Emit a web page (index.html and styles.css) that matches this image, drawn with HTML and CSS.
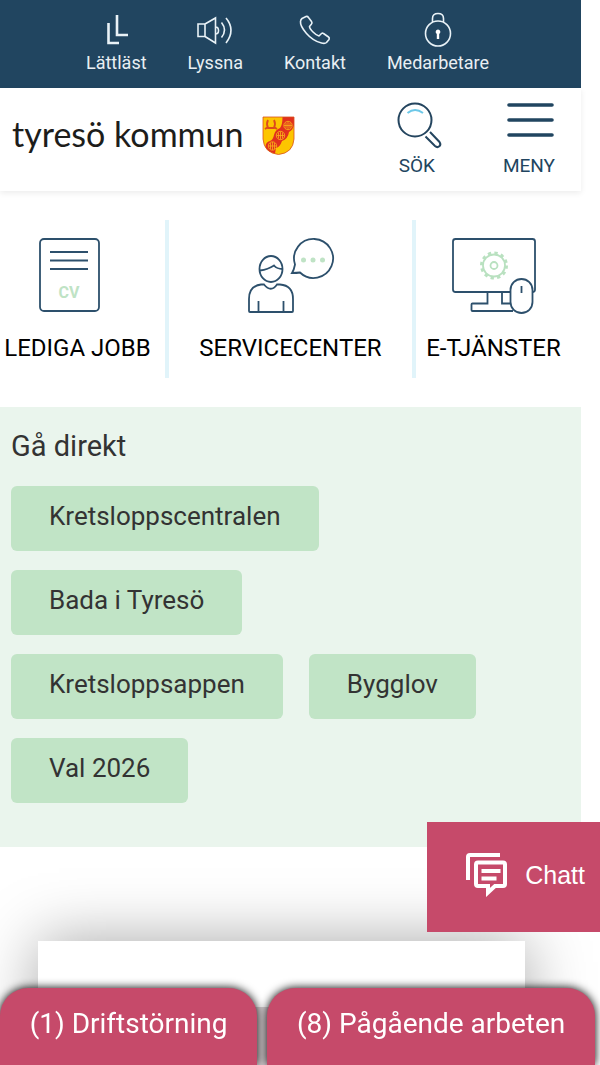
FILE: index.html
```
<!DOCTYPE html>
<html lang="sv">
<head>
  <meta charset="utf-8">
  <meta name="viewport" content="width=device-width, initial-scale=1">
  <title>Tyresö kommun</title>
  <link rel="stylesheet" href="styles.css">
</head>
<body>
  <div class="page">
    <nav class="topnav" aria-label="Genvägar">
      <a href="#lattlast">
        <svg width="36" height="36" viewBox="0 0 36 36"><path class="thick" d="M10.500 8v20H21M19 0v20h11"/></svg>
        <span>Lättläst</span>
      </a>
      <a href="#lyssna">
        <svg width="36" height="36" viewBox="0 0 36 36"><path d="M1 9h7v12.500H1zM8 9l10.500-6v25L8 21.500M18.500 12q3 0 3 3.500t-3 3.500M24.500 7.500q6 7.500 0 15M29 3q10 12 0 25"/></svg>
        <span>Lyssna</span>
      </a>
      <a href="#kontakt">
        <svg width="36" height="36" viewBox="0 0 36 36"><path d="M5 3.500L9 1.500q1.500-.5 2.500 1l3 4q1 1.500 0 2.500l-2 2.500q0 2 3.500 5.500t6 4l2.500-2.500q1-.8 2 0l5 3.500q1.300 1 .5 2.500l-2.500 3q-1.500 1.500-5 .5Q16 26 9.500 18.500T3.500 6.500Q3.700 4.500 5 3.500z"/></svg>
        <span>Kontakt</span>
      </a>
      <a href="#medarbetare">
        <svg width="36" height="36" viewBox="0 0 36 36"><circle cx="18" cy="18.500" r="12.500"/><path d="M12.500 7V3.500q0-5 5.500-5t5.500 5V7"/><path class="fill" d="M18 14.500a2.500 2.500 0 0 1 1.200 4.600V24h-2.400v-4.900A2.500 2.500 0 0 1 18 14.500z"/></svg>
        <span>Medarbetare</span>
      </a>
    </nav>

    <header class="header">
      <a class="logo" href="#start">
        <span>tyresö kommun</span>
        <svg width="34" height="40" viewBox="0 0 34 40">
          <path fill="#fdc500" d="M1 1h31v22q-1 14-15.500 15.500Q2 37 1 23z"/>
          <path fill="#e1301e" d="M20.500 1H32v8q-1 5-5 7-1 7-7 9-2 6-6 7l-1 5.500Q6 36 3.500 31q0-5 4.500-6 3-1 4-6 1-5 6-7 2.500-3 2.500-11z"/>
          <g fill="#e1301e" stroke="#f9b21a" stroke-width=".8">
            <circle cx="26" cy="9.500" r="4.200"/><path d="M26 5.500v8M22 9.500h8M24 6.500v6M28 6.500v6"/>
            <circle cx="18.500" cy="19.500" r="4.200"/><path d="M18.500 15.500v8M14.500 19.500h8M16.500 16.500v6M20.500 16.500v6"/>
            <circle cx="10.500" cy="30" r="4.200"/><path d="M10.500 26v8M6.500 30h8M8.500 27v6M12.500 27v6"/>
          </g>
          <path fill="none" stroke="#dc4a1c" stroke-width="1.800" d="M6 4q-2 4 0 8h6q2-4 0-8M3 13l3-2M15 13l-3-2"/>
          <path fill="none" stroke="#d8501c" stroke-width=".8" d="M1 1h31v22q-1 14-15.500 15.500Q2 37 1 23z"/>
        </svg>
      </a>
      <div class="tools">
        <button type="button">
          <svg width="52" height="48" viewBox="0 0 52 48">
            <g fill="none" stroke="#24455f" stroke-width="2"><circle cx="24" cy="18" r="16.500"/><path d="M39 30l9.500 10q1.800 2.500-.2 4.300t-4.300-.3L34.500 34.500"/></g>
            <path fill="none" stroke="#6dc8e8" stroke-width="2" d="M16.500 11q7.500-6 15.500 0"/>
          </svg>
          <span>SÖK</span>
        </button>
        <button type="button">
          <svg width="52" height="48" viewBox="0 0 52 48"><path stroke="#214560" stroke-width="3.600" stroke-linecap="round" d="M6 3h43M6 18h43M6 33h43"/></svg>
          <span>MENY</span>
        </button>
      </div>
    </header>

    <main>
      <nav class="shortcuts" aria-label="Tjänster">
        <a href="#jobb">
          <svg width="90" height="80" viewBox="0 0 90 80">
            <rect x="7" y="3" width="59" height="72" rx="4"/><path d="M17 16h38M17 24.500h38M17 33h38"/>
            <text x="36" y="62" text-anchor="middle">CV</text>
          </svg>
          <span>LEDIGA JOBB</span>
        </a>
        <a href="#servicecenter">
          <svg width="90" height="80" viewBox="0 0 90 80">
            <ellipse cx="25" cy="33" rx="11.500" ry="13"/><path d="M14 34.500q8-1 14-5 3 3.500 8.500 3.500"/>
            <path d="M3 75V63Q3 50 15 48.500h3Q25 57 31 48.500h3q13 1 13 14.500v12q0 1-1 1H4q-1 0-1-1zM12.500 76V65M37.500 76V65"/>
            <path d="M49 28.500A19.500 19.500 0 1 1 54 36.500Q51 37 46 37q2-3 3-8.500z"/>
            <g class="mint-fill"><circle cx="57.500" cy="24" r="2.500"/><circle cx="67" cy="24" r="2.500"/><circle cx="76.500" cy="24" r="2.500"/></g>
          </svg>
          <span>SERVICECENTER</span>
        </a>
        <a href="#etjanster">
          <svg width="90" height="80" viewBox="0 0 90 80">
            <rect x="4" y="3" width="82" height="53" rx="2.500"/>
            <path d="M38.500 56v11.500H23.500q-1 0-1 1V74q0 1 1 1H64M53 56v11.500h9"/>
            <rect class="mouse" x="61.500" y="43" width="22" height="34" rx="11"/><path d="M72.500 50v7"/>
            <g class="mint"><circle cx="45" cy="29.500" r="3.500"/><circle cx="45" cy="29.500" r="11"/><circle class="teeth" cx="45" cy="29.500" r="12.500"/></g>
          </svg>
          <span>E-TJÄNSTER</span>
        </a>
      </nav>

      <section class="direct">
        <h2>Gå direkt</h2>
        <ul>
          <li><a href="#kretsloppscentralen">Kretsloppscentralen</a></li>
          <li><a href="#bada">Bada i Tyresö</a></li>
          <li><a href="#kretsloppsappen">Kretsloppsappen</a></li>
          <li><a href="#bygglov">Bygglov</a></li>
          <li><a href="#val">Val 2026</a></li>
        </ul>
      </section>

      <section class="card">
        <div class="card-image"></div>
      </section>
    </main>
  </div>

  <button type="button" class="chat">
    <svg width="44" height="44" viewBox="0 0 44 44"><path d="M3 27V4q0-2 2-2h30"/><path d="M13 9.500h25q2 0 2 2V31q0 2-2 2h-8l-7 6.500V33H13q-2 0-2-2V11.500q0-2 2-2z"/><path d="M16.500 18h19M16.500 25.500h15"/></svg>
    <span>Chatt</span>
  </button>

  <div class="alerts">
    <button type="button">(1) Driftstörning</button>
    <button type="button">(8) Pågående arbeten</button>
  </div>
</body>
</html>
```
FILE: styles.css
```
* {
  box-sizing: border-box;
}
body {
  margin: 0;
  background: #fff;
  color: #333;
  font-family: Roboto, "Liberation Sans", sans-serif;
}
a {
  color: inherit;
  text-decoration: none;
}
button {
  border: 0;
  background: none;
  padding: 0;
  color: inherit;
  font: inherit;
  cursor: pointer;
}
svg {
  display: block;
}
.page {
  height: 100vh;
  padding-right: 19px;
  overflow: hidden;
}

/* top bar */
.topnav {
  display: flex;
  justify-content: center;
  gap: 41px;
  height: 88px;
  padding: 15px 6px 0 0;
  background: #214560;
  color: #e9eff3;
}
.topnav a {
  display: flex;
  flex-direction: column;
  align-items: center;
  font-size: 18px;
  line-height: 24px;
}
.topnav svg {
  overflow: visible;
  fill: none;
  stroke: #e9f2f7;
  stroke-width: 1.6;
}
.topnav .thick {
  stroke-width: 2.6;
}
.topnav .fill {
  fill: #fff;
  stroke: none;
}

/* logo and menu */
.header {
  display: flex;
  justify-content: space-between;
  height: 103px;
  padding: 14px 26px 0 12px;
  box-shadow: 0 2px 6px #00000014;
}
.logo {
  display: flex;
  align-items: center;
  gap: 18px;
  height: 68px;
  color: #1d1d1b;
  font-family: Lato, sans-serif;
  font-size: 34px;
  line-height: 36px;
}
.logo span {
  padding-bottom: 4px;
}
.tools {
  display: flex;
  gap: 60px;
  color: #214560;
  font-size: 19px;
  line-height: 24px;
}
.tools button {
  display: flex;
  flex-direction: column;
  align-items: center;
  gap: 4px;
}

/* icon links */
.shortcuts {
  display: grid;
  grid-template-columns: 169fr 247fr 165fr;
  padding: 29px 0;
}
.shortcuts a {
  display: flex;
  flex-direction: column;
  align-items: center;
  gap: 18px;
  height: 158px;
  padding-top: 16px;
  border-right: 4px solid #e1f4fa;
  color: #000;
  font-size: 24px;
  line-height: 28px;
}
.shortcuts a:first-child {
  padding-right: 10px;
}
.shortcuts a:last-child {
  border-right: 0;
  padding-right: 10px;
}
.shortcuts svg {
  fill: none;
  stroke: #2d506c;
  stroke-width: 1.8;
}
.shortcuts text {
  fill: #bfe3c5;
  stroke: none;
  font-size: 16px;
  font-weight: 700;
}
.shortcuts .mint {
  stroke: #b9e1c0;
}
.mint .teeth {
  stroke-width: 3;
  stroke-dasharray: 3.3 3.245;
}
.shortcuts .mint-fill {
  fill: #bfe3c5;
  stroke: none;
}
.shortcuts .mouse {
  fill: #fff;
}

/* quick links */
.direct {
  padding: 20px 48px 44px 11px;
  background: #eaf5ed;
}
.direct h2 {
  margin: 0 0 21px;
  font-size: 29px;
  font-weight: 400;
  line-height: 38px;
}
.direct ul {
  display: flex;
  flex-wrap: wrap;
  gap: 19px 26px;
  margin: 0;
  padding: 0;
  list-style: none;
}
.direct li a {
  display: block;
  padding: 12px 38px 17px;
  border-radius: 6px;
  background: #c1e4c6;
  font-size: 26px;
  line-height: 36px;
}

.card {
  height: 400px;
  margin: 94px 56px 0 38px;
  padding-top: 66px;
  background: #fff;
  box-shadow: 0 0 60px #00000059;
}
.card-image {
  height: 260px;
  background: #d8d0d3;
}

/* floating controls */
.chat {
  position: fixed;
  right: 0;
  bottom: 133px;
  display: flex;
  align-items: center;
  gap: 16px;
  height: 110px;
  padding: 0 15px 4px 38px;
  background: #c64a6a;
  color: #fff;
  font-family: "Liberation Sans", Arial, sans-serif;
  font-size: 25px;
}
.chat svg {
  fill: none;
  stroke: #fff;
  stroke-width: 4;
}
.alerts {
  position: fixed;
  bottom: 0;
  left: 0;
  right: 5px;
  display: flex;
  gap: 10px;
}
.alerts button {
  flex: 1 1 auto;
  height: 77px;
  padding-bottom: 6px;
  border-radius: 28px 28px 0 0;
  background: #c64a6a;
  box-shadow: 0 0 10px #000;
  color: #fff;
  font-size: 28px;
}
```
